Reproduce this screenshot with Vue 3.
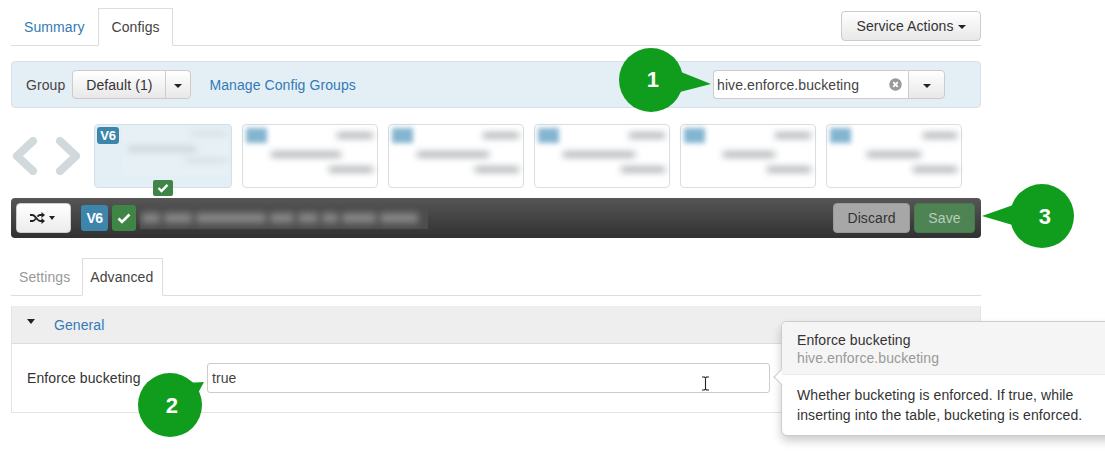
<script setup>
const versions = [
  { top: 36, mid: 70, midRight: 32, low: 44 },
  { top: 36, mid: 72, midRight: 30, low: 44 },
  { top: 36, mid: 72, midRight: 30, low: 44 },
  { top: 36, mid: 52, midRight: 36, low: 44 },
  { top: 34, mid: 54, midRight: 36, low: 44 }
]

// blurred out words of the version note
const noteWords = [18, 28, 70, 24, 20, 16, 34, 38]

const callouts = [
  { n: 1, cx: 651, cy: 80, tail: '676,70 711,84 676,93', tx: 653, ty: 87 },
  { n: 2, cx: 170, cy: 405, tail: '186,383 204,382 197,395', tx: 172, ty: 413 },
  { n: 3, cx: 1042, cy: 216, tail: '1016,204 982,216 1016,226', tx: 1045, ty: 224 }
]
</script>

<template>
  <div class="page">
    <div class="content">
      <div class="tabs">
        <a class="tab tab--first">Summary</a>
        <a class="tab tab--active tab--configs">Configs</a>
        <button class="btn btn--actions">Service Actions <i class="caret"></i></button>
      </div>

      <div class="group-bar">
        <span class="group-label">Group</span>
        <div class="btn-group">
          <button class="btn btn--default">Default (1)</button>
          <button class="btn btn--split"><i class="caret"></i></button>
        </div>
        <a class="link manage">Manage Config Groups</a>
        <div class="search">
          <div class="search-input">
            <span>hive.enforce.bucketing</span>
            <svg class="clear" width="13" height="13" viewBox="0 0 13 13">
              <circle cx="6.5" cy="6.5" r="6.2" fill="#999" />
              <path d="M4.2 4.2l4.6 4.6M8.8 4.2l-4.6 4.6" stroke="#fff" stroke-width="1.9" />
            </svg>
          </div>
          <button class="btn btn--search"><i class="caret"></i></button>
        </div>
      </div>

      <div class="carousel">
        <div class="arrows">
          <svg width="68" height="38" viewBox="0 0 68 38">
            <path d="M21 4L5 19l16 15M48 4l16 15-16 15" fill="none" stroke="#d1d9dd" stroke-width="8" stroke-linecap="round" stroke-linejoin="round" />
          </svg>
        </div>
        <div class="card card--current">
          <span class="card-badge">V6</span>
          <div class="blur-wrap">
            <i class="smudge" style="width: 36px"></i>
            <i class="smudge smudge--mid" style="width: 68px; margin-right: 31px"></i>
            <i class="smudge" style="width: 42px"></i>
          </div>
          <span class="card-check">
            <svg width="12" height="10" viewBox="0 0 12 10"><path d="M1.5 5l3 3 6-6.2" fill="none" stroke="#fff" stroke-width="2.4" /></svg>
          </span>
        </div>
        <div v-for="(v, i) in versions" :key="i" class="card">
          <span class="card-blob"></span>
          <div class="blur-wrap">
            <i class="smudge" :style="{ width: v.top + 'px' }"></i>
            <i class="smudge smudge--mid" :style="{ width: v.mid + 'px', marginRight: v.midRight + 'px' }"></i>
            <i class="smudge" :style="{ width: v.low + 'px' }"></i>
          </div>
        </div>
      </div>

      <div class="version-bar">
        <button class="btn btn--shuffle">
          <svg width="15" height="12" viewBox="0 0 15 12">
            <path d="M0 3h2.500c3 0 4.500 6 7.500 6h2M0 9h2.500c1.300 0 2.300-1 3.200-2.200M7.500 4.600C8.300 3.600 9 3 10 3h2" fill="none" stroke="#222" stroke-width="1.800" />
            <path d="M11.500 0L15 3l-3.500 3zM11.500 6L15 9l-3.500 3z" fill="#222" />
          </svg>
          <i class="caret"></i>
        </button>
        <span class="bar-badge">V6</span>
        <span class="bar-check">
          <svg width="14" height="11" viewBox="0 0 14 11"><path d="M1.500 5.500l3.500 3.500 7.500-7.500" fill="none" stroke="#fff" stroke-width="2.600" /></svg>
        </span>
        <div class="bar-note">
          <i v-for="(w, i) in noteWords" :key="i" :style="{ width: w + 'px' }"></i>
        </div>
        <button class="btn btn--discard">Discard</button>
        <button class="btn btn--save">Save</button>
      </div>

      <div class="tabs tabs--sub">
        <a class="tab tab--muted">Settings</a>
        <a class="tab tab--active tab--advanced">Advanced</a>
      </div>

      <div class="panel">
        <div class="panel-head">
          <i class="caret caret--panel"></i>
          <a class="link">General</a>
        </div>
        <div class="panel-body">
          <label class="field-label">Enforce bucketing</label>
          <div class="field-input">true</div>
        </div>
      </div>
    </div>

    <!-- mouse cursor in the input -->
    <svg class="ibeam" width="9" height="15" viewBox="0 0 9 15">
      <path d="M1 1h2.500l1 1 1-1H8M4.500 2v11M1 14h2.500l1-1 1 1H8" fill="none" stroke="#222" stroke-width="1.100" />
    </svg>

    <div class="popover">
      <div class="popover-arrow"></div>
      <div class="popover-head">
        <div>Enforce bucketing</div>
        <div class="popover-sub">hive.enforce.bucketing</div>
      </div>
      <div class="popover-body">
        Whether bucketing is enforced. If true, while<br />
        inserting into the table, bucketing is enforced.
      </div>
    </div>

    <svg class="callouts" width="1105" height="468" viewBox="0 0 1105 468">
      <g v-for="c in callouts" :key="c.n">
        <polygon :points="c.tail" fill="#109c1d" />
        <circle :cx="c.cx" :cy="c.cy" r="32" fill="#109c1d" />
        <text :x="c.tx" :y="c.ty" class="callout-num" text-anchor="middle">{{ c.n }}</text>
      </g>
    </svg>
  </div>
</template>

<style>
html, body {
  margin: 0;
  background: #fff;
}
</style>

<style scoped>
.page {
  position: relative;
  width: 1105px;
  height: 468px;
  overflow: hidden;
  background: #fff;
  color: #333;
  font-family: "Liberation Sans", Arial, sans-serif;
  font-size: 14px;
  letter-spacing: 0.09px;
}

.content {
  width: 970px;
  padding: 8px 0 0 11px;
}

.tabs {
  display: flex;
  align-items: flex-start;
  height: 38px;
  box-sizing: border-box;
  border-bottom: 1px solid #ddd;
}

.tab {
  box-sizing: border-box;
  height: 38px;
  padding: 0 13px;
  line-height: 37px;
  color: #337ab7;
  border: 1px solid transparent;
}

.tab--first {
  padding: 0 12px;
}

.tab--active {
  color: #444;
  background: #fff;
  border-color: #ddd;
  border-bottom-color: #fff;
}

.tab--configs {
  padding: 0 12px 0 13px;
}

.tab--advanced {
  padding: 0 9px 0 7px;
}

.tab--muted {
  padding: 0 11px 0 7px;
  color: #999;
}

.tabs--sub {
  margin-top: 20px;
}

.link {
  color: #337ab7;
}

.btn {
  box-sizing: border-box;
  height: 30px;
  padding: 0 12px;
  font: inherit;
  letter-spacing: inherit;
  color: #333;
  background: linear-gradient(#fff, #e8e8e8);
  border: 1px solid #ccc;
  border-radius: 4px;
}

.caret {
  display: inline-block;
  width: 0;
  height: 0;
  vertical-align: middle;
  border-top: 4px solid #222;
  border-left: 4px solid transparent;
  border-right: 4px solid transparent;
}

.btn--actions {
  width: 140px;
  margin: 3px 0 0 auto;
  padding: 0;
}

.group-bar {
  display: flex;
  align-items: center;
  box-sizing: border-box;
  height: 47px;
  margin-top: 15px;
  padding: 0 35px 0 14px;
  background: #e4eff5;
  border: 1px solid #d6e2e9;
  border-radius: 4px;
}

.group-label {
  margin-right: 7px;
  color: #444;
}

.btn-group {
  display: flex;
}

.btn--default {
  width: 94px;
  height: 29px;
  padding: 0;
  border-radius: 4px 0 0 4px;
}

.btn--split {
  width: 26px;
  height: 29px;
  padding: 0;
  margin-left: -1px;
  border-radius: 0 4px 4px 0;
}

.manage {
  margin-left: 18px;
}

.search {
  display: flex;
  margin-left: auto;
}

.search-input {
  display: flex;
  align-items: center;
  justify-content: space-between;
  box-sizing: border-box;
  width: 195px;
  height: 29px;
  padding: 0 5px 0 3px;
  color: #444;
  background: #fff;
  border: 1px solid #ccc;
  border-right: 0;
  border-radius: 4px 0 0 4px;
}

.clear {
  margin-right: 1px;
}

.btn--search {
  width: 37px;
  height: 29px;
  padding: 0;
  border-radius: 0 4px 4px 0;
}

.carousel {
  display: flex;
  gap: 10px;
  height: 63px;
  margin-top: 16px;
}

.arrows {
  display: flex;
  align-items: center;
  width: 72px;
  padding: 0 0 0 1px;
}

.card {
  position: relative;
  box-sizing: border-box;
  width: 136px;
  height: 64px;
  background: #fff;
  border: 1px solid #ddd;
  border-radius: 4px;
}

.card--current {
  width: 138px;
  background: #e4eff5;
  border-color: #d3e0e8;
}

.card-badge {
  position: absolute;
  top: 2px;
  left: 2px;
  width: 22px;
  height: 17px;
  font-size: 13px;
  font-weight: bold;
  letter-spacing: -0.3px;
  line-height: 17px;
  text-align: center;
  color: #fff;
  background: #3d85ab;
  border-radius: 3px;
}

.card-blob {
  position: absolute;
  top: 3px;
  left: 3px;
  width: 21px;
  height: 15px;
  background: #84b5d0;
  filter: blur(2.5px);
}

.card-check {
  position: absolute;
  left: 58px;
  bottom: -9px;
  display: flex;
  align-items: center;
  justify-content: center;
  width: 20px;
  height: 16px;
  background: #3f8545;
  border-radius: 2px;
}

.blur-wrap {
  display: flex;
  flex-direction: column;
  align-items: flex-end;
  padding: 8px 4px 0 0;
}

.card--current .blur-wrap {
  box-sizing: border-box;
  height: 47px;
  margin: 3px 3px 0 28px;
  padding: 5px 1px 0 0;
  background: #e7f0f5;
}

.smudge {
  display: block;
  height: 5px;
  margin-bottom: 14px;
  background: #9ea4a8;
  filter: blur(3.5px);
}

.smudge--mid {
  margin-bottom: 10px;
}

.version-bar {
  display: flex;
  align-items: center;
  box-sizing: border-box;
  height: 40px;
  margin-top: 11px;
  padding: 0 6px 0 5px;
  background: linear-gradient(#565656, #313131);
  border-radius: 4px;
}

.btn--shuffle {
  display: flex;
  align-items: center;
  gap: 4px;
  width: 55px;
  padding: 0 0 0 13px;
  background: linear-gradient(#fff, #ececec);
}

.btn--shuffle .caret {
  border-top-width: 4px;
  border-left-width: 3.5px;
  border-right-width: 3.5px;
}

.bar-badge,
.bar-check {
  display: flex;
  align-items: center;
  justify-content: center;
  height: 26px;
  border-radius: 3px;
  color: #fff;
}

.bar-badge {
  width: 27px;
  margin-left: 10px;
  font-size: 14px;
  font-weight: bold;
  letter-spacing: -0.5px;
  background: #3d85ab;
}

.bar-check {
  width: 24px;
  margin-left: 4px;
  background: #3f8545;
}

.bar-note {
  display: flex;
  align-items: center;
  gap: 4px;
  box-sizing: border-box;
  width: 288px;
  height: 21px;
  margin-left: 4px;
  padding-left: 2px;
  background: #4d4d4d;
}

.bar-note i {
  display: block;
  height: 10px;
  background: #878787;
  filter: blur(3.5px);
}

.btn--discard {
  width: 77px;
  margin-left: auto;
  padding: 0;
  color: #333;
  background: #a7a7a7;
  border: 1px solid #999;
}

.btn--save {
  width: 61px;
  margin-left: 4px;
  padding: 0;
  color: #b9cdbb;
  background: #4e8353;
  border: 1px solid #497a4d;
}

.panel {
  margin-top: 10px;
  border: 1px solid #e3e3e3;
  border-top: 0;
}

.panel-head {
  display: flex;
  align-items: center;
  box-sizing: border-box;
  height: 38px;
  padding-left: 15px;
  background: #eee;
  border-bottom: 1px solid #ddd;
}

.caret--panel {
  margin: -6px 19px 0 0;
  border-top-width: 5px;
  border-left-width: 4.500px;
  border-right-width: 4.500px;
}

.panel-body {
  display: flex;
  align-items: center;
  height: 68px;
  padding: 0 0 0 15px;
  box-sizing: border-box;
}

.field-label {
  width: 180px;
  color: #333;
}

.field-input {
  box-sizing: border-box;
  width: 563px;
  height: 30px;
  padding-left: 4px;
  line-height: 28px;
  color: #444;
  background: #fff;
  border: 1px solid #ccc;
  border-radius: 3px;
}

.ibeam {
  position: absolute;
  left: 701px;
  top: 376px;
}

.popover {
  position: absolute;
  left: 781px;
  top: 321px;
  width: 340px;
  background: #fff;
  border: 1px solid #ccc;
  border-radius: 6px;
  box-shadow: 0 5px 10px rgba(0, 0, 0, 0.2);
}

.popover-arrow {
  position: absolute;
  top: 49px;
  left: -6px;
  width: 11px;
  height: 11px;
  background: #fff;
  border-left: 1px solid #ccc;
  border-bottom: 1px solid #ccc;
  transform: rotate(45deg);
}

.popover-head {
  position: relative;
  box-sizing: border-box;
  height: 53px;
  padding: 9px 15px 0;
  line-height: 18px;
  background: #f5f5f5;
  border-bottom: 1px solid #ebebeb;
  border-radius: 5px 5px 0 0;
}

.popover-sub {
  color: #999;
}

.popover-body {
  position: relative;
  padding: 10px 15px;
  line-height: 20px;
}

.callouts {
  position: absolute;
  top: 0;
  left: 0;
  pointer-events: none;
}

.callout-num {
  font-family: "Liberation Sans", Arial, sans-serif;
  font-size: 22px;
  font-weight: bold;
  fill: #fff;
}
</style>
